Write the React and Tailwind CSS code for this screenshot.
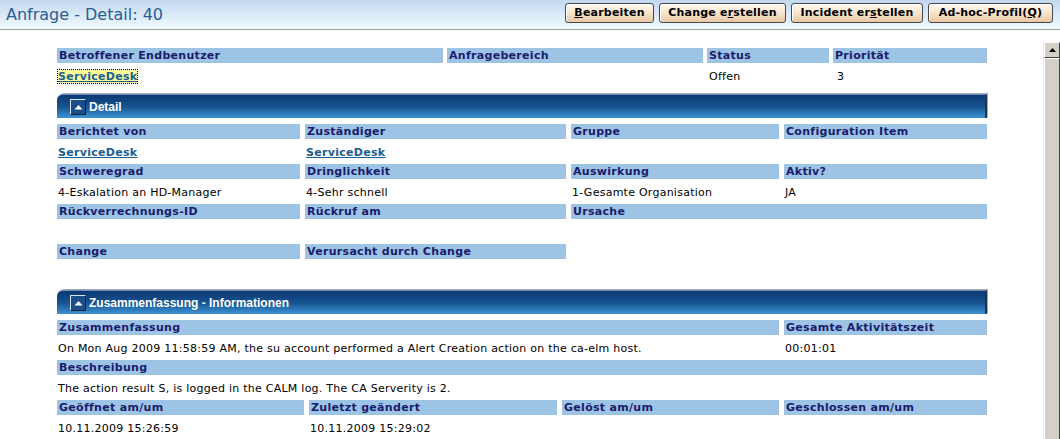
import React from "react";

const FONT = { fontFamily: '"DejaVu Sans", Verdana, sans-serif' };

function Btn({ w, children }) {
  return (
    <button
      className={`h-[20px] rounded-[3px] border border-[#4a4a4a] bg-gradient-to-b from-[#fffaf3] via-[#f8e4cd] to-[#e9c7a2] text-[11px] font-bold text-black leading-[18px] tracking-[0.2px] shadow-[inset_1px_1px_0_#ffffff] ${w}`}
    >
      {children}
    </button>
  );
}

function L({ children, className = "" }) {
  return (
    <div className={`h-[15px] bg-[#9dc3e5] pl-[2px] text-[11px] font-bold leading-[15px] tracking-[0.3px] text-[#1b1b6c] whitespace-nowrap overflow-hidden ${className}`}>
      {children}
    </div>
  );
}

function V({ children, className = "" }) {
  return (
    <div className={`h-[25px] pl-[1px] pt-[2px] text-[11px] leading-[23px] tracking-[0.25px] text-black whitespace-nowrap ${className}`}>
      {children}
    </div>
  );
}

function Link({ focus }) {
  return (
    <span
      className={`font-bold underline tracking-[0.3px] text-[#1b5e94] ${focus ? "bg-[#ffff99] outline-1 outline-dotted outline-black" : ""}`}
    >
      ServiceDesk
    </span>
  );
}

function Section({ title }) {
  return (
    <div className="mt-[6px] mb-[6px] flex h-[24px] items-center rounded-tl-[6px] border-t border-t-[#6f8fb8] border-r-2 border-r-[#22324a] bg-gradient-to-b from-[#0b3874] via-[#17538f] to-[#3c93d5] pl-[13px] shadow-[1px_-1px_0_#a0a8b4]">
      <div className="flex h-[16px] w-[16px] items-center justify-center border border-t-[#d7e3f1] border-l-[#d7e3f1] border-r-[#0a1d3a] border-b-[#0a1d3a] bg-[#1b4f8c]">
        <svg width="9" height="6" viewBox="0 0 9 6">
          <polygon points="0.5,5.5 4.5,1 8.5,5.5" fill="#ffffff" />
        </svg>
      </div>
      <span
        className="ml-[3px] text-[12px] font-bold text-white"
        style={{ fontFamily: '"Liberation Sans", Arial, sans-serif' }}
      >
        {title}
      </span>
    </div>
  );
}

export default function App() {
  return (
    <div className="h-[439px] w-[1060px] overflow-hidden bg-white" style={FONT}>
      {/* Header */}
      <div className="flex h-[30px] items-center justify-between border-b border-b-[#9a9a9a] bg-gradient-to-b from-[#c3d7ef] to-[#f0fbff]">
        <div className="pl-[6px] text-[16px] text-[#2b5c96]">Anfrage - Detail: 40</div>
        <div className="flex gap-[5px] pr-[7px] pb-[3px]">
          <Btn w="w-[89px]"><u>B</u>earbeiten</Btn>
          <Btn w="w-[127px]">Change e<u>r</u>stellen</Btn>
          <Btn w="w-[132px]">Incident er<u>s</u>tellen</Btn>
          <Btn w="w-[125px]">Ad-hoc-Profil(<u>Q</u>)</Btn>
        </div>
      </div>

      <div className="flex">
        {/* Content */}
        <div className="flex-1 pl-[57px] pt-[18px]">
          <div className="w-[930px]">
            {/* Top */}
            <div className="grid grid-cols-[386px_256px_122px_154px] gap-x-[4px]">
              <L>Betroffener Endbenutzer</L>
              <L>Anfragebereich</L>
              <L>Status</L>
              <L>Priorität</L>
              <V><Link focus /></V>
              <V></V>
              <V className="pl-[2px]">Offen</V>
              <V className="pl-[4px]">3</V>
            </div>

            <Section title="Detail" />

            <div className="grid grid-cols-[243px_261px_208px_203px] gap-x-[5px]">
              <L>Berichtet von</L>
              <L>Zuständiger</L>
              <L>Gruppe</L>
              <L>Configuration Item</L>
              <V><Link /></V>
              <V><Link /></V>
              <V></V>
              <V></V>
              <L>Schweregrad</L>
              <L>Dringlichkeit</L>
              <L>Auswirkung</L>
              <L>Aktiv?</L>
              <V>4-Eskalation an HD-Manager</V>
              <V>4-Sehr schnell</V>
              <V>1-Gesamte Organisation</V>
              <V>JA</V>
              <L>Rückverrechnungs-ID</L>
              <L>Rückruf am</L>
              <L className="col-span-2">Ursache</L>
              <V></V>
              <V></V>
              <V className="col-span-2"></V>
              <L>Change</L>
              <L>Verursacht durch Change</L>
              <div></div>
              <div></div>
              <V></V>
              <V></V>
              <V></V>
              <V></V>
            </div>

            <Section title="Zusammenfassung - Informationen" />

            <div className="grid grid-cols-[722px_203px] gap-x-[5px]">
              <L>Zusammenfassung</L>
              <L>Gesamte Aktivitätszeit</L>
              <V>On Mon Aug 2009 11:58:59 AM, the su account performed a Alert Creation action on the ca-elm host.</V>
              <V>00:01:01</V>
              <L className="col-span-2">Beschreibung</L>
              <V className="col-span-2">The action result S, is logged in the CALM log. The CA Serverity is 2.</V>
            </div>
            <div className="grid grid-cols-[247px_248px_217px_203px] gap-x-[5px]">
              <L>Geöffnet am/um</L>
              <L>Zuletzt geändert</L>
              <L>Gelöst am/um</L>
              <L>Geschlossen am/um</L>
              <V>10.11.2009 15:26:59</V>
              <V>10.11.2009 15:29:02</V>
              <V></V>
              <V></V>
            </div>
          </div>
        </div>

        {/* Scrollbar */}
        <div className="mt-[12px] mr-0 flex h-[400px] w-[17px] flex-col border-l border-l-[#ece9e2] bg-[#d4d0c8]">
          <div className="flex h-[16px] w-[16px] items-center justify-center border border-t-white border-l-white border-r-[#404040] border-b-[#404040] bg-[#d4d0c8]">
            <svg width="7" height="4" viewBox="0 0 7 4">
              <polygon points="0,4 3.5,0 7,4" fill="#000000" />
            </svg>
          </div>
          <div className="flex-1 border border-t-white border-l-white border-r-[#404040] border-b-[#404040] bg-[#d4d0c8]" />
        </div>
      </div>
    </div>
  );
}
